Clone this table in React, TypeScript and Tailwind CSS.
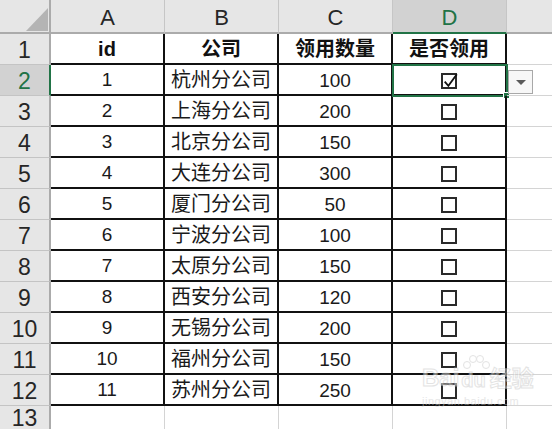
import React from "react";

const font = { fontFamily: '"Liberation Sans", "Noto Sans CJK SC", sans-serif' };

const rows: [number, string, number, boolean][] = [
  [1, "杭州分公司", 100, true],
  [2, "上海分公司", 200, false],
  [3, "北京分公司", 150, false],
  [4, "大连分公司", 300, false],
  [5, "厦门分公司", 50, false],
  [6, "宁波分公司", 100, false],
  [7, "太原分公司", 150, false],
  [8, "西安分公司", 120, false],
  [9, "无锡分公司", 200, false],
  [10, "福州分公司", 150, false],
  [11, "苏州分公司", 250, false],
];

const CheckBox = ({ checked }: { checked: boolean }) => (
  <span className="relative block w-[16px] h-[16px] mt-[3px] border-2 border-[#2a2a2a] bg-white">
    {checked && (
      <svg className="absolute -left-[2px] -top-[4px]" width="19" height="19" viewBox="0 0 18 18">
        <path d="M3.5 10 L7 14 L15 3" fill="none" stroke="#111" strokeWidth="1.7" />
      </svg>
    )}
  </span>
);

const RowHead = ({ n, active }: { n: number; active?: boolean }) => (
  <div
    className={
      "w-[51px] shrink-0 flex items-center justify-center pt-[2px] text-[23px] border-b border-b-[#c4c4c4] border-r-2 " +
      (active ? "bg-[#d2d2d2] text-[#217346] border-r-[#217346]" : "bg-[#e6e6e6] text-[#262626] border-r-[#ababab]")
    }
  >
    {n}
  </div>
);

export default function App() {
  return (
    <div className="relative w-[552px] h-[429px] overflow-hidden bg-white text-[#111]" style={font}>
      {/* column headers */}
      <div className="flex h-[34px]">
        <div className="relative w-[51px] shrink-0 bg-[#e6e6e6] border-r-2 border-b-2 border-[#ababab]">
          <div className="absolute left-[26px] top-[8px] w-0 h-0 border-l-[22px] border-l-transparent border-b-[23px] border-b-[#b4b4b4]" />
        </div>
        {["A", "B", "C"].map((c) => (
          <div
            key={c}
            className="w-[114px] shrink-0 flex items-center justify-center pt-[2px] text-[22px] text-[#262626] bg-[#e6e6e6] border-r border-r-[#c6c6c6] border-b-2 border-b-[#ababab]"
          >
            {c}
          </div>
        ))}
        <div className="w-[114px] shrink-0 flex items-center justify-center pt-[2px] text-[22px] text-[#217346] bg-[#d2d2d2] border-r border-r-[#c6c6c6] border-b-2 border-b-[#217346]">
          D
        </div>
        <div className="flex-1 bg-[#e6e6e6] border-b-2 border-b-[#ababab]" />
      </div>

      {/* row 1 */}
      <div className="flex h-[31px]">
        <RowHead n={1} />
        {["id", "公司", "领用数量", "是否领用"].map((t) => (
          <div
            key={t}
            className="w-[114px] shrink-0 flex items-center justify-center text-[20px] font-bold border-r-2 border-b-2 border-[#111]"
          >
            {t}
          </div>
        ))}
        <div className="flex-1 border-b border-[#d4d4d4]" />
      </div>

      {rows.map(([id, name, qty, checked], i) => (
        <div key={id} className="flex h-[31px]">
          <RowHead n={i + 2} active={i === 0} />
          <div className="w-[114px] shrink-0 flex items-center justify-center pt-[2px] text-[19px] text-[#1a1a1a] border-r-2 border-b-2 border-[#111]">
            {id}
          </div>
          <div className="w-[114px] shrink-0 flex items-center justify-center text-[20px] text-[#1a1a1a] border-r-2 border-b-2 border-[#111]">
            {name}
          </div>
          <div className="w-[114px] shrink-0 flex items-center justify-center pt-[4px] text-[19px] text-[#1a1a1a] border-r-2 border-b-2 border-[#111]">
            {qty}
          </div>
          <div className="relative w-[114px] shrink-0 flex items-center justify-center border-r-2 border-b-2 border-[#111]">
            <CheckBox checked={checked} />
            {i === 0 && (
              <div className="absolute -left-[1px] -top-[1px] w-[116px] h-[33px] border-2 border-[#217346]">
                <div className="absolute -right-[4px] -bottom-[4px] w-[7px] h-[7px] bg-[#217346] border border-white" />
              </div>
            )}
          </div>
          <div className="relative flex-1 border-b border-[#d4d4d4]">
            {i === 0 && (
              <div className="absolute left-[1px] top-[5px] w-[25px] h-[24px] bg-[#f7f7f7] border border-[#a8a8a8] flex items-center justify-center">
                <div className="w-0 h-0 border-l-[5px] border-r-[5px] border-t-[5px] border-l-transparent border-r-transparent border-t-[#5a5a5a]" />
              </div>
            )}
          </div>
        </div>
      ))}

      {/* row 13 */}
      <div className="flex h-[24px]">
        <RowHead n={13} />
        {[0, 1, 2, 3].map((k) => (
          <div key={k} className="w-[114px] shrink-0 border-r border-[#d4d4d4]" />
        ))}
        <div className="flex-1" />
      </div>

      {/* watermark */}
      <div className="absolute left-[422px] top-[366px] opacity-50 pointer-events-none">
        <div className="flex items-end">
          <span className="text-[24px] font-bold leading-none text-white [-webkit-text-stroke:1px_#c8c8c8]">Bai</span>
          <span className="relative ml-[2px] text-[20px] font-bold leading-none text-white [-webkit-text-stroke:1px_#c8c8c8]">
            <svg className="absolute left-[1px] -top-[16px]" width="28" height="18" viewBox="0 0 28 18">
              <circle cx="5" cy="11" r="3.5" fill="white" stroke="#c8c8c8" />
              <circle cx="11" cy="5" r="3.5" fill="white" stroke="#c8c8c8" />
              <circle cx="18" cy="5" r="3.5" fill="white" stroke="#c8c8c8" />
              <circle cx="24" cy="11" r="3.5" fill="white" stroke="#c8c8c8" />
            </svg>
            du
          </span>
          <span className="ml-[4px] text-[22px] font-bold leading-none text-white [-webkit-text-stroke:1px_#c8c8c8]">经验</span>
        </div>
        <div className="mt-[6px] text-[11px] leading-none tracking-[0.5px] text-[#d0d0d0]">jingyan.baidu.com</div>
      </div>
    </div>
  );
}
